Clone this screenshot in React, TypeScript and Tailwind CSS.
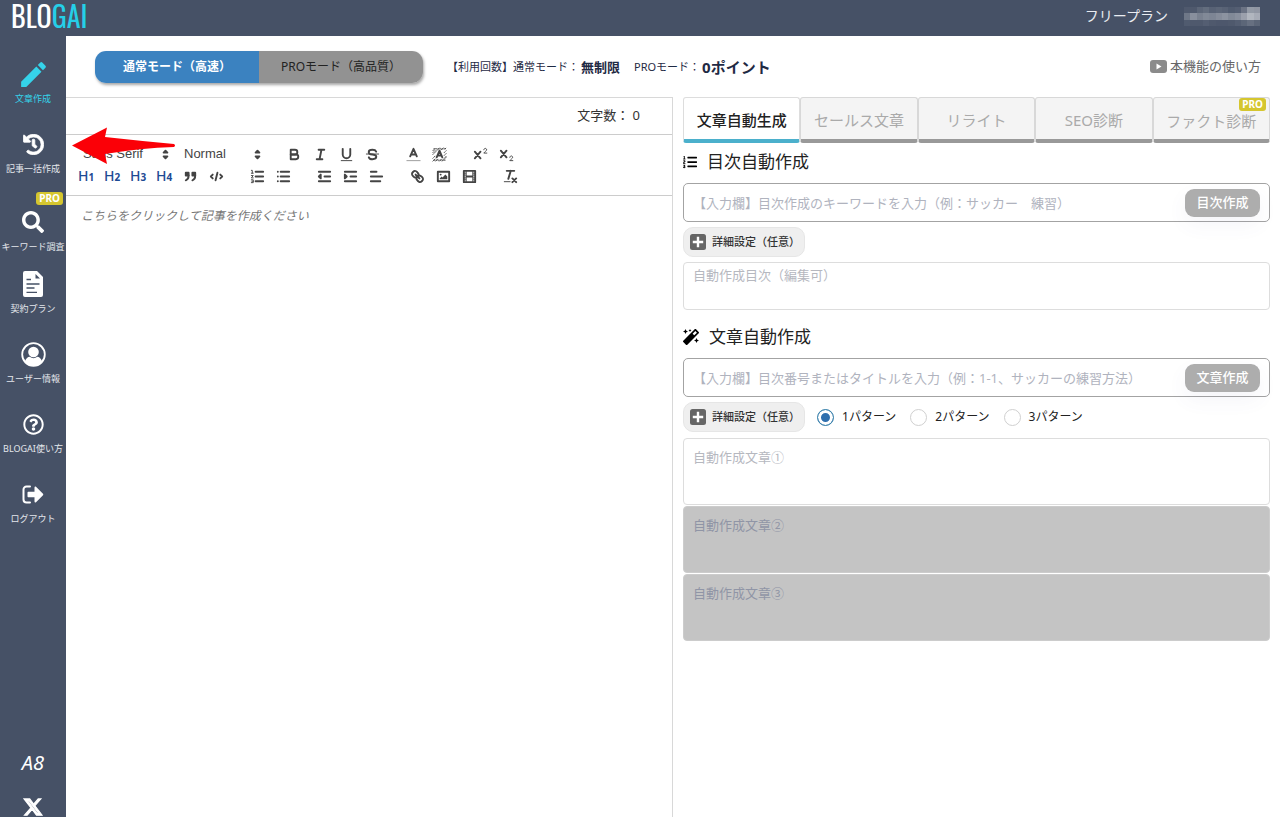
import React, { useState } from 'react';
import { FaXTwitter } from 'react-icons/fa6';
import { FaHistory, FaListOl, FaMagic, FaRegQuestionCircle, FaSearch } from 'react-icons/fa';
import { MdEdit } from 'react-icons/md';
import clsx from 'clsx';

const DocumentIcon = () => (
  <svg width="20" height="26" viewBox="0 0 20 26" aria-hidden="true">
    <path fill="currentColor" d="M2 0h10.500v6.500a1 1 0 0 0 1 1H20V24a2 2 0 0 1-2 2H2a2 2 0 0 1-2-2V2a2 2 0 0 1 2-2Z" />
    <path fill="currentColor" d="M11 0h3l6 6v3H11Z" />
    <path fill="#465166" d="M12.500 3v4.500H17Z" />
    <path stroke="#465166" strokeWidth="1.300" d="M3.500 8.500H8M3.500 13h13M3.500 17h8M3.500 21.300h10.500" />
  </svg>
);

const UserIcon = () => (
  <svg width="25" height="25" viewBox="0 0 25 25" aria-hidden="true">
    <circle cx="12.500" cy="12.500" r="11.300" fill="none" stroke="currentColor" strokeWidth="1.800" />
    <circle cx="12.500" cy="10" r="5.300" fill="currentColor" />
    <path fill="currentColor" d="M3.800 19.500c1.200-3 3-4.700 5-4.700 2.200 1.900 5.200 1.900 7.400 0 2 0 3.800 1.700 5 4.700a11 11 0 0 1-17.400 0Z" />
  </svg>
);

const LogoutIcon = () => (
  <svg width="22" height="19" viewBox="0 0 22 19" aria-hidden="true">
    <path d="M8 1.500H4.500a3 3 0 0 0-3 3v10a3 3 0 0 0 3 3H8" fill="none" stroke="currentColor" strokeWidth="2" strokeLinecap="round" />
    <path d="M6.500 6.800h6V2.500c0-1 .8-1.400 1.500-.7l7 7c.4.4.4 1 0 1.400l-7 7c-.7.7-1.500.3-1.500-.7v-4.300h-6c-.6 0-1-.4-1-1V7.800c0-.6.4-1 1-1Z" fill="currentColor" />
  </svg>
);

const PlayIcon = () => (
  <svg width="17" height="13" viewBox="0 0 17 13" aria-hidden="true">
    <rect width="17" height="13" rx="3" fill="#8b8b8b" />
    <path d="M6.500 3.500v6l5-3Z" fill="#fff" />
  </svg>
);

const PlusIcon = () => (
  <svg width="16" height="16" viewBox="0 0 16 16" className="shrink-0" aria-hidden="true">
    <rect width="16" height="16" rx="2.500" fill="#666" />
    <path d="M8 2.800v10.400M2.800 8h10.400" stroke="#fff" strokeWidth="2.400" />
  </svg>
);

const ProBadge = () => (
  <span className="rounded-[3px] bg-[#d5c62f] px-[3px] text-[10px] font-bold leading-[13px] text-white">PRO</span>
);

interface NavItem {
  label: string;
  icon: React.ReactNode;
  active?: boolean;
  pro?: boolean;
  tight?: boolean;
}

const navItems: NavItem[] = [
  { label: '文章作成', icon: <MdEdit size={33} />, active: true },
  { label: '記事一括作成', icon: <FaHistory size={21} stroke="currentColor" strokeWidth="20" /> },
  { label: 'キーワード調査', icon: <FaSearch size={22} />, pro: true, tight: true },
  { label: '契約プラン', icon: <DocumentIcon />, tight: true },
  { label: 'ユーザー情報', icon: <UserIcon /> },
  { label: 'BLOGAI使い方', icon: <FaRegQuestionCircle size={21} /> },
  { label: 'ログアウト', icon: <LogoutIcon /> },
];

const Sidebar = () => (
  <nav className="flex w-[66px] shrink-0 flex-col items-center bg-[#465166] text-white">
    {navItems.map(item => (
      <a
        key={item.label}
        href="#"
        className={clsx('flex w-full flex-col items-center', item.tight ? 'mt-4' : 'mt-6', item.active && 'text-[#35d3ea]')}
      >
        {item.pro && (
          <span className="mb-[3px] flex self-end pr-[3px]">
            <ProBadge />
          </span>
        )}
        <span className="flex h-7 items-center">{item.icon}</span>
        <span className={clsx('mt-1 whitespace-nowrap text-[9px] leading-[14px]', !item.active && 'text-[#e4e7ec]')}>{item.label}</span>
      </a>
    ))}
    <div className="mt-auto flex flex-col items-center gap-5 pt-6">
      <a href="#" className="text-[20px] italic leading-7">A8</a>
      <a href="#" aria-label="X"><FaXTwitter size={20} stroke="currentColor" strokeWidth="28" /></a>
    </div>
  </nav>
);

// Grey levels of the masked account name, one row per line
const maskRows = [
  [0.05, 0.05, 0.12, 0.16, 0.1, 0.12, 0.1, 0.06, 0.08, 0.2, 0.42, 0.4],
  [0.22, 0.36, 0.28, 0.32, 0.3, 0.34, 0.38, 0.32, 0.36, 0.46, 0.58, 0.52],
  [0.06, 0.05, 0.05, 0.08, 0.05, 0.04, 0.04, 0.05, 0.08, 0.12, 0.18, 0.12],
];

const MaskedName = () => (
  <svg width="76" height="19" viewBox="0 0 12 3" preserveAspectRatio="none" shapeRendering="crispEdges" aria-hidden="true">
    {maskRows.map((row, y) =>
      row.map((level, x) => <rect key={`${x}-${y}`} x={x} y={y} width="1" height="1" fill="#fff" opacity={level} />)
    )}
  </svg>
);

const Header = () => (
  <header className="flex h-9 items-center justify-between bg-[#465166] pl-[11px] pr-5 text-white">
    <a href="#" className="pb-1 font-['Oswald','Roboto_Condensed','Open_Sans_Condensed',sans-serif] text-[28px] leading-8">
      BLO<span className="text-[#25cfe8]">GAI</span>
    </a>
    <div className="flex items-center gap-4 pb-1 text-[14px] leading-6 text-[#e9ecf1]">
      フリープラン
      <MaskedName />
    </div>
  </header>
);

const Glyph = ({ children }: { children: React.ReactNode }) => (
  <svg width="17" height="17" viewBox="0 0 18 18" fill="none" stroke="#444" strokeWidth="2" strokeLinecap="round" strokeLinejoin="round" aria-hidden="true">
    {children}
  </svg>
);

const PickerArrows = () => (
  <Glyph>
    <path fill="#444" d="M7 11l2 2 2-2ZM7 7l2-2 2 2Z" />
  </Glyph>
);

const toolIcons: Record<string, React.ReactNode> = {
  bold: (
    <>
      <path d="M5 4h4.500a2.500 2.500 0 0 1 0 5H5Z" />
      <path d="M5 9h5.500a2.500 2.500 0 0 1 0 5H5Z" />
    </>
  ),
  italic: <path d="M7 4h6M5 14h6M8 14l2-10" />,
  underline: (
    <>
      <path d="M5 3v6a4 4 0 0 0 8 0V3" />
      <rect x="3" y="15" width="12" height="1" fill="#444" stroke="none" />
    </>
  ),
  strike: (
    <>
      <path strokeWidth="1" d="M15.500 8.500h-13" />
      <path d="M12.900 6C12.400 4.800 10.900 4 9 4 6.800 4 5 5.100 5 6.500S6.500 8.700 9 9s4 1 4 2.500S11.200 14 9 14c-1.900 0-3.500-.8-3.900-2" />
    </>
  ),
  color: (
    <>
      <path d="M5.500 11L9 3l3.500 8M11.600 9H6.400" />
      <path stroke="#999" strokeWidth="1" d="M2 15.500h14" />
    </>
  ),
  background: (
    <>
      <path strokeWidth="1" strokeDasharray="1 1.200" d="M2 5l3-3M2 9l7-7M2 13l3-3M11 4l2-2M2 16l3-3M5 16l2-2M9 16l2-2M12 16l4-4M14 7l2-2M14 10l2-2M15 3l1-1M2 7l3-3M14 13l2-2M3 3h12M3 15h12" />
      <path d="M6 12l3-7 3 7M11 10H7" />
    </>
  ),
  super: (
    <>
      <path d="M3 6l6 7M9 6l-6 7" />
      <path strokeWidth="1" d="M12.500 4c0-2 3-2 3 0 0 1.200-2 2-3 3.500h3.200" />
    </>
  ),
  sub: (
    <>
      <path d="M3 5l6 7M9 5l-6 7" />
      <path strokeWidth="1" d="M12.500 12c0-2 3-2 3 0 0 1.200-2 2-3 3.500h3.200" />
    </>
  ),
  quote: (
    <>
      <path fill="#444" d="M4 5h3v3H4ZM11 5h3v3h-3Z" />
      <path d="M7 8c0 4-3 5-3 5M14 8c0 4-3 5-3 5" />
    </>
  ),
  code: <path d="M5 7L3 9l2 2M13 7l2 2-2 2M10 5L8 13" />,
  ordered: (
    <>
      <path d="M7 4h8M7 9h8M7 14h8" />
      <path strokeWidth="1" d="M2.500 2.500h1v3M2.500 5.500h2M2.500 8h2L2.500 10.500h2M2.500 12.500h2v3h-2M3 14h1.500" />
    </>
  ),
  bullet: <path d="M6 4h9M6 9h9M6 14h9M3 4h0M3 9h0M3 14h0" />,
  outdent: (
    <>
      <path d="M3 14h12M3 4h12M9 9h6" />
      <path fill="#444" d="M5 7v4L3 9Z" />
    </>
  ),
  indent: (
    <>
      <path d="M3 14h12M3 4h12M9 9h6" />
      <path fill="#444" d="M3 7v4l2-2Z" />
    </>
  ),
  align: <path d="M3 9h12M3 14h10M3 4h6" />,
  link: (
    <>
      <path d="M7 7l4 4" />
      <path d="M8.900 4.577a3.476 3.476 0 0 1 .36 4.679A3.476 3.476 0 0 1 4.577 8.900C3.185 7.500 2.035 6.400 4.217 4.217S7.500 3.185 8.900 4.577Z" />
      <path d="M13.423 9.100a3.476 3.476 0 0 0-4.679-.36 3.476 3.476 0 0 0 .36 4.679c1.392 1.392 2.500 2.542 4.679.36S14.815 10.500 13.423 9.100Z" />
    </>
  ),
  image: (
    <>
      <rect x="3" y="4" width="12" height="10" />
      <circle cx="6" cy="7" r="1" fill="#444" stroke="none" />
      <path fill="#444" stroke="none" d="M5 12v-1l2-2 1 1 3-3 2 2v3Z" />
    </>
  ),
  video: (
    <>
      <rect x="3" y="3" width="12" height="12" />
      <path strokeWidth="1" d="M5.500 3v12M12.500 3v12M3 5.500h2M3 7.500h2M3 10.500h2M3 12.500h2M13 5.500h2M13 7.500h2M13 10.500h2M13 12.500h2" />
      <path d="M6 9h6" />
    </>
  ),
  clean: (
    <>
      <path d="M5 3h8M6.700 11.500L9.300 3M11 11l4 4M15 11l-4 4" />
      <rect x="2" y="14" width="7" height="1" fill="#444" stroke="none" />
    </>
  ),
};

const ToolGroup = ({ tools }: { tools: string[] }) => (
  <div className="flex">
    {tools.map(name => (
      <button key={name} type="button" aria-label={name} className="flex h-[22px] w-[26px] items-center justify-center">
        <Glyph>{toolIcons[name]}</Glyph>
      </button>
    ))}
  </div>
);

const Toolbar = () => (
  <div className="border-y border-[#ccc] py-2 pl-[7px] font-['Liberation_Sans',Arial,sans-serif] text-[#444]">
    <div className="flex gap-[15px]">
      <div className="flex text-[13px] font-medium leading-[22px]">
        <button type="button" className="flex w-[101px] items-center justify-between pl-[10px]">
          Sans Serif
          <PickerArrows />
        </button>
        <button type="button" className="flex w-[92px] items-center justify-between pl-[10px]">
          Normal
          <PickerArrows />
        </button>
      </div>
      <ToolGroup tools={['bold', 'italic', 'underline', 'strike']} />
      <ToolGroup tools={['color', 'background']} />
      <ToolGroup tools={['super', 'sub']} />
    </div>
    <div className="flex gap-[15px]">
      <div className="flex">
        {[1, 2, 3, 4].map(level => (
          <button key={level} type="button" className="h-[22px] w-[26px] whitespace-nowrap font-['Noto_Sans',sans-serif] text-[14px] font-medium leading-[22px] text-[#1d4a94]">
            H<span className="text-[10px] font-bold">{level}</span>
          </button>
        ))}
        <ToolGroup tools={['quote', 'code']} />
      </div>
      <ToolGroup tools={['ordered', 'bullet']} />
      <ToolGroup tools={['outdent', 'indent', 'align']} />
      <ToolGroup tools={['link', 'image', 'video']} />
      <ToolGroup tools={['clean']} />
    </div>
  </div>
);

const Editor = () => (
  <section className="flex flex-col border-r border-t border-[#d8d8d8]">
    <div className="flex h-9 items-center justify-end pr-8 text-[13px] text-[#333]">文字数： 0</div>
    <Toolbar />
    <textarea
      aria-label="記事本文"
      placeholder="こちらをクリックして記事を作成ください"
      className="w-full flex-1 resize-none px-[15px] py-[10px] text-[12px] leading-5 outline-none placeholder:italic placeholder:text-[#777]"
    />
  </section>
);

const ModeBar = () => (
  <div className="flex h-[61px] items-center pl-[29px] pr-[19px] text-[#1f2a44]">
    <div className="flex h-8 overflow-hidden rounded-[11px] text-[12px] shadow-[1px_2px_3px_rgba(0,0,0,0.35)]">
      <button type="button" className="w-[164px] bg-[#3b82c0] font-bold text-white">通常モード（高速）</button>
      <button type="button" className="w-[164px] bg-[#929292] text-[#222]">PROモード（高品質）</button>
    </div>
    <p className="ml-6 flex items-center gap-[2px] text-[11px] leading-5">
      【利用回数】通常モード：<b className="text-[13px]">無制限</b>
    </p>
    <p className="ml-[14px] flex items-center gap-[2px] text-[11px] leading-5">
      PROモード：<b className="text-[15px]">0ポイント</b>
    </p>
    <a href="#" className="ml-auto flex items-center gap-[3px] text-[13px] text-[#666]">
      <PlayIcon />
      本機能の使い方
    </a>
  </div>
);

const tabs = ['文章自動生成', 'セールス文章', 'リライト', 'SEO診断', 'ファクト診断'];

const Tabs = () => {
  const [current, setCurrent] = useState(0);

  return (
    <div role="tablist" className="flex">
      {tabs.map((tab, i) => (
        <button
          key={tab}
          type="button"
          role="tab"
          aria-selected={current === i}
          onClick={() => setCurrent(i)}
          className={clsx(
            'relative h-[46px] flex-1 whitespace-nowrap rounded-[3px] border border-b-4 text-[15px] leading-[18px]',
            i === 4 ? 'pt-1' : 'pt-0.5',
            current === i ? 'border-[#ddd] border-b-[#4bb0cc] bg-white font-medium text-[#222]' : 'border-[#d8d8d8] border-b-[#999] bg-[#f4f4f4] text-[#aaa]'
          )}
        >
          {tab}
          {i === 4 && (
            <span className="absolute right-[3px] top-0 flex">
              <ProBadge />
            </span>
          )}
        </button>
      ))}
    </div>
  );
};

interface PromptFieldProps {
  placeholder: string;
  action: string;
}

const PromptField = ({ placeholder, action }: PromptFieldProps) => (
  <div className="flex h-[39px] items-center rounded-[5px] border border-[#a3a3a3] px-[9px]">
    <input
      type="text"
      aria-label={action}
      placeholder={placeholder}
      className="h-full min-w-0 flex-1 text-[13px] outline-none placeholder:text-[#b0b3be]"
    />
    <button type="button" className="h-7 w-[75px] rounded-[9px] bg-[#adadad] text-[13px] font-medium text-white shadow-[0_8px_20px_rgba(80,80,160,0.06)]">
      {action}
    </button>
  </div>
);

const DetailButton = () => (
  <button type="button" className="flex h-[30px] w-[122px] items-center gap-[6px] whitespace-nowrap rounded-[10px] border border-[#e6e6e6] bg-[#efefef] pl-[6px] text-[11px] font-medium text-[#333]">
    <PlusIcon />
    詳細設定（任意）
  </button>
);

const Generator = () => {
  const [pattern, setPattern] = useState(1);

  return (
    <section className="flex flex-col px-[10px]">
      <Tabs />
      <h2 className="mb-0.5 flex h-[38px] items-center gap-[10px] text-[17px] text-[#222]">
        <FaListOl size={14} className="text-black" />
        目次自動作成
      </h2>
      <PromptField placeholder="【入力欄】目次作成のキーワードを入力（例：サッカー　練習）" action="目次作成" />
      <div className="mt-[5px]">
        <DetailButton />
      </div>
      <textarea
        aria-label="自動作成目次"
        placeholder="自動作成目次（編集可）"
        className="mt-[5px] h-12 resize-none rounded-[4px] border border-[#ddd] px-[9px] py-[2px] text-[13px] leading-5 outline-none placeholder:text-[#b6b8bf]"
      />
      <h2 className="mb-0.5 mt-2 flex h-[38px] items-center gap-[10px] text-[17px] text-[#222]">
        <FaMagic size={16} className="text-black" />
        文章自動作成
      </h2>
      <PromptField placeholder="【入力欄】目次番号またはタイトルを入力（例：1-1、サッカーの練習方法）" action="文章作成" />
      <div className="mt-[5px] flex items-center">
        <DetailButton />
        <div className="ml-3 flex gap-[14px] text-[12px] text-[#222]">
          {[1, 2, 3].map(n => (
            <label key={n} className="flex items-center gap-2">
              <input
                type="radio"
                name="pattern"
                checked={pattern === n}
                onChange={() => setPattern(n)}
                className="size-[17px] appearance-none rounded-full border border-[#d0d0d0] bg-white checked:border-[#3f87ad] checked:bg-[#2f6fae] checked:shadow-[inset_0_0_0_3px_#fff]"
              />
              {n}パターン
            </label>
          ))}
        </div>
      </div>
      <div className="mt-[6px] flex flex-col gap-px">
        {['①', '②', '③'].map((mark, i) => (
          <textarea
            key={mark}
            aria-label={`自動作成文章${mark}`}
            placeholder={`自動作成文章${mark}`}
            disabled={i >= pattern}
            className="h-[67px] resize-none rounded-[4px] border border-[#ddd] px-[9px] py-2 text-[13px] leading-5 outline-none placeholder:text-[#b6b8bf] disabled:border-[#ccc] disabled:bg-[#c4c4c4] disabled:placeholder:text-[#9095a6]"
          />
        ))}
      </div>
    </section>
  );
};

const App: React.FC = () => (
  <div className="relative flex min-h-screen flex-col bg-white font-['Noto_Sans','Noto_Sans_CJK_JP',sans-serif]">
    <Header />
    <div className="flex flex-1">
      <Sidebar />
      <main className="flex min-w-0 flex-1 flex-col">
        <ModeBar />
        <div className="grid flex-1 grid-cols-2">
          <Editor />
          <Generator />
        </div>
      </main>
    </div>
    <svg className="pointer-events-none absolute left-[71px] top-[126px]" width="106" height="40" viewBox="0 0 106 40" aria-hidden="true">
      <path fill="#fb0007" d="M1 19.500L36 1.500L34 11Q70 15 103 18Q105 19.500 103 21Q70 22 34 28L36 38Z" />
    </svg>
  </div>
);

export default App;
